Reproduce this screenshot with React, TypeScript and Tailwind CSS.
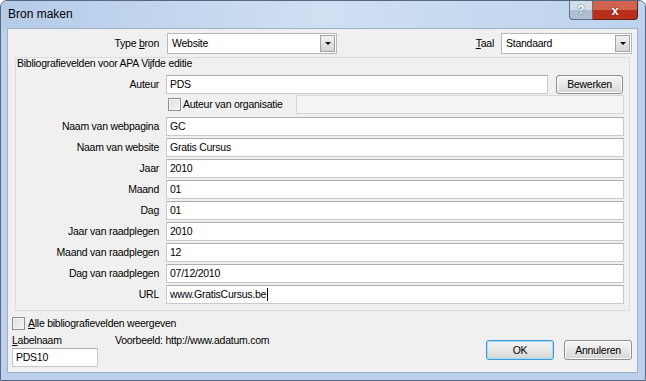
import type { ReactNode } from 'react';

const FONT = "font-['Liberation_Sans','Arial',sans-serif]";

function Box({ value, caret = false, className = '' }: { value: string; caret?: boolean; className?: string }) {
  return (
    <div
      className={`h-[19px] flex items-center px-[3px] bg-white border border-[#c6cad0] border-t-[#abadb3] text-black whitespace-nowrap ${className}`}
    >
      {value}
      {caret && <span className="inline-block w-px h-[13px] bg-black ml-px" />}
    </div>
  );
}

function Select({ value, className = '' }: { value: string; className?: string }) {
  return (
    <div className={`h-[21px] flex items-stretch bg-white border border-[#b6b9be] ${className}`}>
      <span className="flex-1 flex items-center px-[4px]">{value}</span>
      <span className="w-[15px] m-px flex items-center justify-center border border-[#a3a3a3] bg-gradient-to-b from-[#f2f2f2] to-[#d4d4d4]">
        <span className="w-0 h-0 border-l-[3px] border-r-[3px] border-t-[3px] border-l-transparent border-r-transparent border-t-black" />
      </span>
    </div>
  );
}

function Button({ children, focused = false, className = '' }: { children: ReactNode; focused?: boolean; className?: string }) {
  return (
    <div
      className={`flex items-center justify-center rounded-[3px] border ${
        focused ? 'border-[#3c9ad6] shadow-[inset_0_0_0_1px_#a6dbf7]' : 'border-[#8d8d8d] shadow-[inset_0_0_0_1px_#fcfcfc]'
      } bg-gradient-to-b from-[#f3f3f3] via-[#e9e9e9] to-[#d4d4d4] text-black ${className}`}
    >
      {children}
    </div>
  );
}

function Check({ className = '' }: { className?: string }) {
  return (
    <span className={`inline-block w-[13px] h-[13px] border border-[#8e8f8f] bg-gradient-to-br from-[#dedede] to-[#f6f6f6] shadow-[inset_0_0_0_1px_#f4f4f4] ${className}`} />
  );
}

const ROWS: [string, string][] = [
  ['Naam van webpagina', 'GC'],
  ['Naam van website', 'Gratis Cursus'],
  ['Jaar', '2010'],
  ['Maand', '01'],
  ['Dag', '01'],
  ['Jaar van raadplegen', '2010'],
  ['Maand van raadplegen', '12'],
  ['Dag van raadplegen', '07/12/2010'],
];

function Row({ label, children, className = '' }: { label: string; children: ReactNode; className?: string }) {
  return (
    <div className={`flex items-center ${className}`}>
      <span className="w-[143px] text-right whitespace-nowrap">{label}</span>
      <div className="ml-[7px] flex-1 flex items-center">{children}</div>
    </div>
  );
}

export default function App() {
  return (
    <div className={`w-[646px] h-[381px] flex flex-col bg-[#bad0eb] border border-[#55687f] rounded-t-[7px] overflow-hidden text-[10.5px] tracking-[-0.25px] leading-[13px] text-black ${FONT}`}>
      {/* titelbalk */}
      <div className="h-[27px] flex items-start bg-gradient-to-r from-[#b4cbe8] via-[#d0e0f3] to-[#bcd2ed]">
        <span className="mt-[6px] ml-[7px] text-[12px] tracking-normal leading-[14px] text-black">Bron maken</span>
        <div className="ml-auto mr-[7px] flex h-[19px]">
          <div className="w-[24px] h-[19px] flex items-center justify-center rounded-bl-[4px] border border-t-0 border-[#5f708a] bg-[#aebfd4] shadow-[inset_0_9px_0_#d3deeb] text-white font-bold text-[12px] tracking-normal [text-shadow:0_0_2px_#2f3c50]">
            ?
          </div>
          <div className="w-[45px] h-[19px] flex items-center justify-center rounded-br-[4px] border border-t-0 border-l-0 border-[#5e1f16] bg-[#b8301b] shadow-[inset_0_9px_0_#d0644e] text-white font-bold text-[13px] tracking-normal [text-shadow:0_0_2px_#3a0b04]">
            x
          </div>
        </div>
      </div>

      <div className="flex flex-1">
        <div className="w-[6px]" />
        <div className="flex-1 flex flex-col bg-[#f0f0f0] border border-[#9fb1c8]">
          {/* type bron / taal */}
          <div className="flex items-center mt-[4px] pr-[5px]">
            <span className="w-[151px] text-right">
              Type <u>b</u>ron
            </span>
            <Select value="Website" className="ml-[8px] w-[170px]" />
            <span className="ml-auto">
              <u>T</u>aal
            </span>
            <Select value="Standaard" className="ml-[7px] w-[131px]" />
          </div>

          {/* bibliografievelden */}
          <div className="mx-[7px] mt-[3px] h-[254px] border border-[#dcdcdc] pr-[5px] flex flex-col">
            <span className="ml-[1px] mt-[-1px]">Bibliografievelden voor APA Vijfde editie</span>
            <Row label="Auteur" className="mt-[5px]">
              <Box value="PDS" className="flex-1" />
              <Button className="ml-[8px] mr-px w-[67px] h-[19px]">Bewerken</Button>
            </Row>
            <div className="flex items-center mt-px">
              <div className="ml-[152px] flex items-center">
                <Check />
                <span className="ml-[2px]">Auteur van organisatie</span>
              </div>
              <div className="ml-auto w-[328px] h-[19px] bg-[#f4f4f4] border border-[#d6d6d6]" />
            </div>
            <div className="flex flex-col gap-[2px] mt-[3px]">
              {ROWS.map(([l, v]) => (
                <Row key={l} label={l}>
                  <Box value={v} className="flex-1" />
                </Row>
              ))}
              <Row label="URL">
                <Box value="www.GratisCursus.be" caret className="flex-1" />
              </Row>
            </div>
          </div>

          {/* onderste deel */}
          <div className="flex items-center mt-[6px] ml-[4px]">
            <Check />
            <span className="ml-[3px]">
              <u>A</u>lle bibliografievelden weergeven
            </span>
          </div>
          <div className="flex items-start mt-[4px] pr-[5px]">
            <div className="ml-[4px] w-[86px] flex flex-col">
              <span>
                <u>L</u>abelnaam
              </span>
              <Box value="PDS10" className="mt-px" />
            </div>
            <span className="ml-[17px]">Voorbeeld: http://www.adatum.com</span>
            <div className="ml-auto flex gap-[10px] mt-[6px]">
              <Button focused className="w-[68px] h-[20px]">
                OK
              </Button>
              <Button className="w-[68px] h-[20px]">Annuleren</Button>
            </div>
          </div>
        </div>
        <div className="w-[7px]" />
      </div>
      <div className="h-[7px]" />
    </div>
  );
}
